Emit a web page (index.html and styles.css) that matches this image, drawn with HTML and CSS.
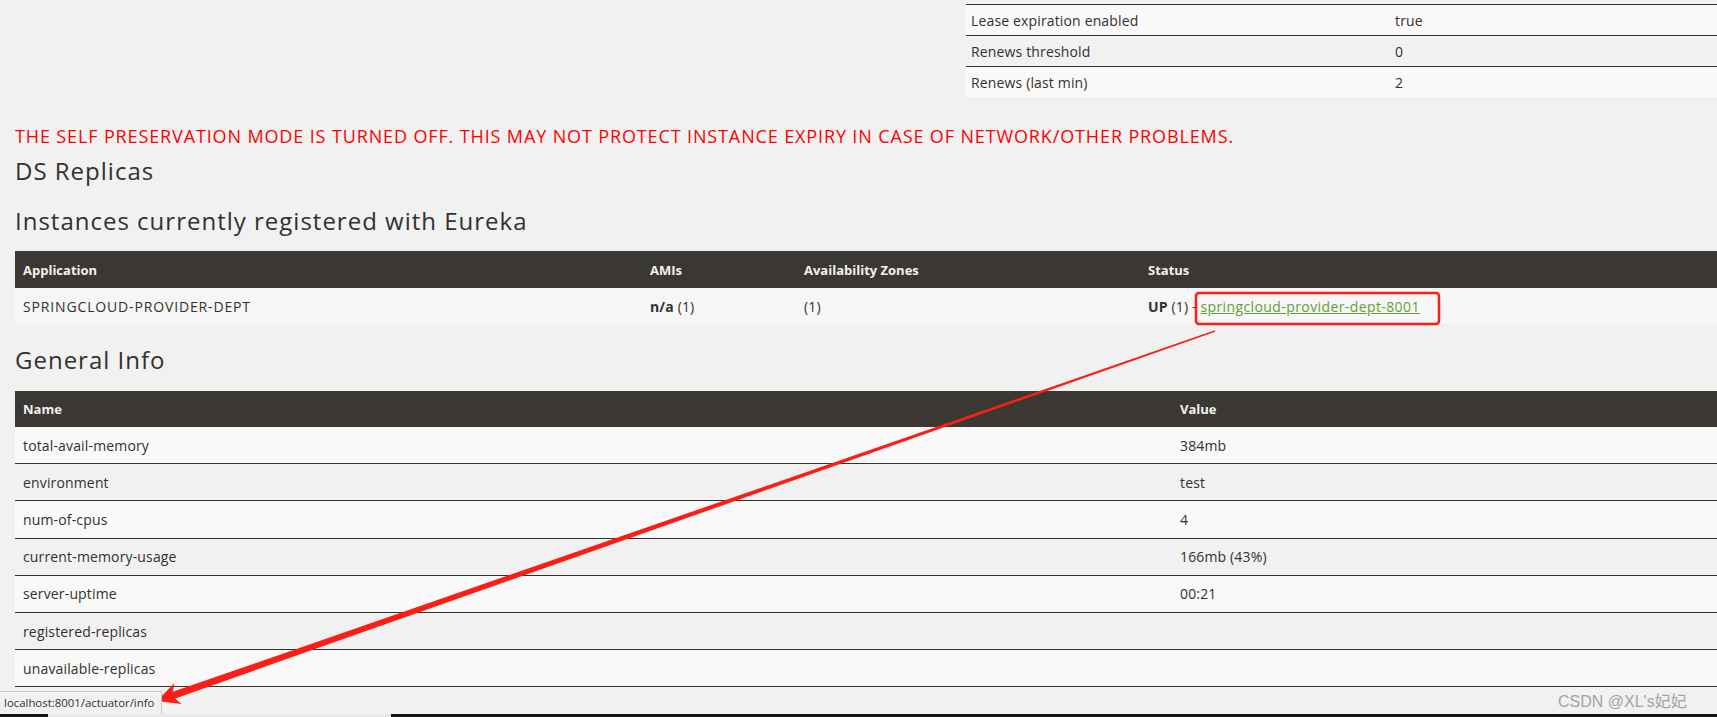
FILE: index.html
```html
<!DOCTYPE html>
<html>
<head>
<meta charset="utf-8">
<title>Eureka</title>
<link rel="stylesheet" href="styles.css">
</head>
<body>
<div class="page">
  <div class="top-row">
    <table class="stats">
      <colgroup><col class="stats-k"><col></colgroup>
      <tr class="light"><td>Lease expiration enabled</td><td>true</td></tr>
      <tr class="grey"><td>Renews threshold</td><td>0</td></tr>
      <tr class="light"><td>Renews (last min)</td><td>2</td></tr>
    </table>
  </div>

  <h4 class="warning">THE SELF PRESERVATION MODE IS TURNED OFF. THIS MAY NOT PROTECT INSTANCE EXPIRY IN CASE OF NETWORK/OTHER PROBLEMS.</h4>
  <h1 class="title ds">DS Replicas</h1>
  <h1 class="title inst">Instances currently registered with Eureka</h1>

  <table class="grid apps">
    <colgroup><col class="c-app"><col class="c-ami"><col class="c-zone"><col></colgroup>
    <thead>
      <tr><th>Application</th><th>AMIs</th><th>Availability Zones</th><th>Status</th></tr>
    </thead>
    <tbody>
      <tr class="app-row">
        <td><b class="app-name">SPRINGCLOUD-PROVIDER-DEPT</b></td>
        <td><b>n/a</b> (1)</td>
        <td>(1)</td>
        <td><b>UP</b> (1) - <a class="inst-link" href="#">springcloud-provider-dept-8001</a></td>
      </tr>
    </tbody>
  </table>

  <h1 class="title gen">General Info</h1>

  <table class="grid info">
    <colgroup><col class="c-name"><col></colgroup>
    <thead>
      <tr><th>Name</th><th>Value</th></tr>
    </thead>
    <tbody>
      <tr class="light"><td>total-avail-memory</td><td>384mb</td></tr>
      <tr class="grey"><td>environment</td><td>test</td></tr>
      <tr class="light"><td>num-of-cpus</td><td>4</td></tr>
      <tr class="grey"><td>current-memory-usage</td><td>166mb (43%)</td></tr>
      <tr class="light"><td>server-uptime</td><td>00:21</td></tr>
      <tr class="grey"><td>registered-replicas</td><td></td></tr>
      <tr class="light"><td>unavailable-replicas</td><td></td></tr>
    </tbody>
  </table>
</div>

<svg class="annot" width="1717" height="717" viewBox="0 0 1717 717">
  <rect x="1196" y="293" width="243" height="31" rx="3" ry="3" fill="none" stroke="#fb1e16" stroke-width="2.5"/>
  <polygon fill="#fb1e16" points="1214.8,330.3 172.8,691.8 174.2,683.3 157,701 181.4,704.1 175.2,698.4 1215.2,331.7"/>
</svg>

<div class="statusbar">localhost:8001/actuator/info</div>
<div class="watermark">CSDN @XL's妃妃</div>
<div class="taskbar"><span class="tb-light"></span></div>
</body>
</html>
```

FILE: styles.css
```css
html, body {
  margin: 0;
  padding: 0;
  overflow: hidden;
  height: 717px;
}
body {
  background: #f1f1f1;
  color: #34302d;
  font-family: "Open Sans", "Noto Sans", sans-serif;
  font-size: 14px;
  letter-spacing: 0.15px;
  position: relative;
}
.page {
  padding-left: 15px;
}
.top-row {
  display: flex;
  justify-content: flex-end;
  padding-top: 4px;
}
table {
  border-collapse: collapse;
  table-layout: fixed;
}
.stats {
  width: 751px;
}
.stats-k { width: 424px; }
.stats td {
  height: 30px;
  padding: 0 0 0 5px;
  border-top: 1px solid #34302d;
  vertical-align: middle;
}
tr.light td { background: #f9f9f9; }
tr.grey td { background: #f1f1f1; }

.warning {
  margin: 29px 0 0 0;
  color: #ff0000;
  font-weight: 400;
  font-size: 18px;
  line-height: 20px;
  letter-spacing: 0.87px;
}
.title {
  margin: 0;
  font-weight: 500;
  font-size: 24px;
  line-height: 30px;
  letter-spacing: 1px;
  color: #34302d;
}
.ds { margin-top: 10px; }
.inst { margin-top: 20px; }
.gen { margin-top: 21px; }

.grid {
  width: 1702px;
}
.apps { margin-top: 15px; }
.info { margin-top: 16px; }
.grid th {
  background: #3b3833;
  color: #f1f1f1;
  font-weight: 700;
  font-size: 13px;
  letter-spacing: 0;
  text-align: left;
  padding: 0 0 0 8px;
  height: 37px;
  vertical-align: middle;
}
.grid td {
  padding: 0 0 0 8px;
  vertical-align: middle;
}
.c-app { width: 627px; }
.c-ami { width: 154px; }
.c-zone { width: 344px; }
.app-row td {
  height: 36px;
  background: #f6f6f6;
}
.app-name {
  font-weight: 400;
  letter-spacing: 0.85px;
}
.inst-link {
  color: #5fa134;
  text-decoration: underline;
  letter-spacing: 0.4px;
}
.info th { height: 36px; }
.c-name { width: 1157px; }
.info td {
  height: 36.2px;
  border-bottom: 1px solid #34302d;
}

.annot {
  position: absolute;
  left: 0;
  top: 0;
}
.statusbar {
  position: absolute;
  left: 0;
  bottom: 3px;
  width: 157px;
  height: 22px;
  line-height: 22px;
  padding-left: 4px;
  background: #f1f1f1;
  border-top: 1px solid #c8c8c8;
  border-right: 1px solid #c8c8c8;
  font-size: 11.4px;
  letter-spacing: 0;
  color: #333;
  white-space: nowrap;
}
.watermark {
  position: absolute;
  left: 1558px;
  top: 688px;
  font-family: "Liberation Sans", "Noto Sans CJK SC", sans-serif;
  font-size: 16px;
  letter-spacing: 0;
  color: #a3a3a3;
  white-space: nowrap;
}
.taskbar {
  position: absolute;
  left: 0;
  bottom: 0;
  width: 100%;
  height: 3px;
  background: #141414;
}
.tb-light {
  position: absolute;
  left: 48px;
  width: 343px;
  top: 0;
  height: 3px;
  background: #e8e8e8;
}
```
